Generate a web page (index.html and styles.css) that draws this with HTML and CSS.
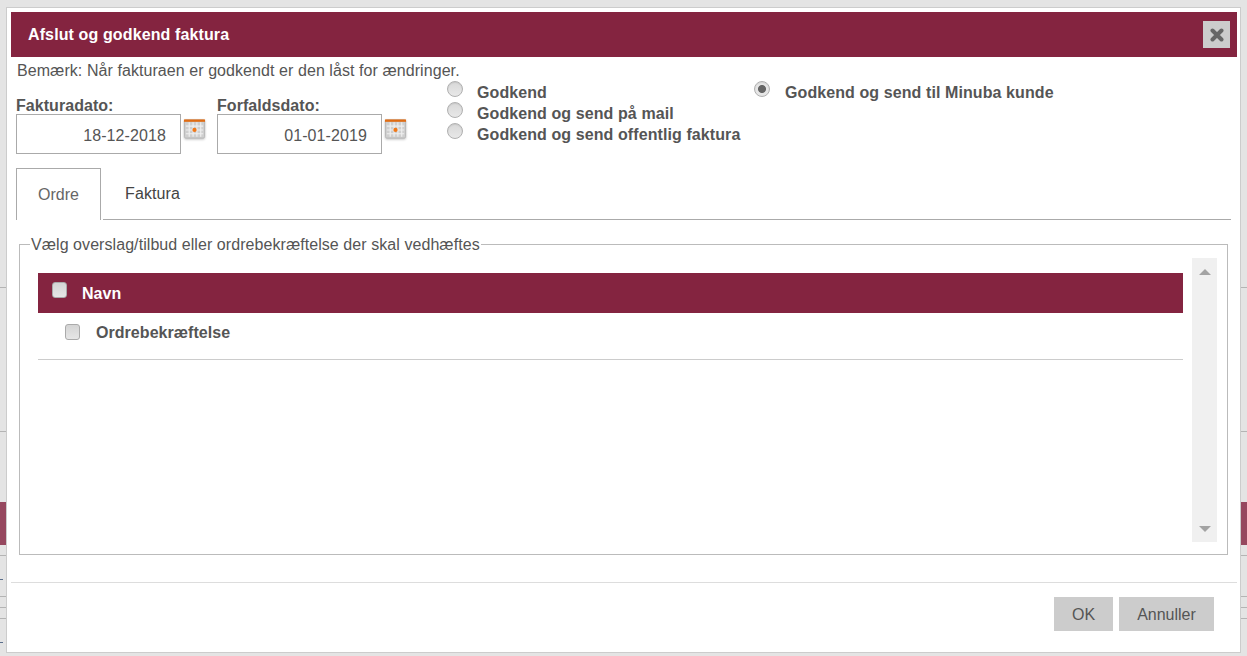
FILE: index.html
```html
<!DOCTYPE html>
<html lang="da">
<head>
<meta charset="utf-8">
<title>Afslut og godkend faktura</title>
<link rel="stylesheet" href="styles.css">
</head>
<body>
<div class="backdrop">
  <div class="bg-line bg-first"></div>
  <div class="bg-line bg-second"></div>
  <div class="bg-bar"></div>
  <div class="bg-line bg-third"></div>
  <div class="bg-dash bg-dash-a"></div>
  <div class="bg-line bg-fourth"></div>
  <div class="bg-line bg-fifth"></div>
  <div class="bg-line bg-fifth"></div>
  <div class="bg-dash bg-dash-b"></div>
</div>
<div class="dialog">
  <header class="title-bar">
    <h1 class="title">Afslut og godkend faktura</h1>
    <button class="close" type="button" aria-label="Luk">
      <svg width="14" height="14" viewBox="0 0 14 14"><path d="M2.5 2.5l9 9M11.5 2.5l-9 9" stroke="#666" stroke-width="4" stroke-linecap="round" fill="none"/></svg>
    </button>
  </header>
  <p class="note">Bemærk: Når fakturaen er godkendt er den låst for ændringer.</p>
  <div class="top-row">
    <div class="dates">
      <div class="date-field">
        <label class="date-label">Fakturadato:</label>
        <div class="date-control">
          <input class="date-input" type="text" value="18-12-2018">
          <svg class="cal" width="24" height="22" viewBox="0 0 24 22"><rect x="1.5" y="1.5" width="21" height="19" rx="1.5" fill="#cfcfcf" stroke="#b8b8b8"/><rect x="1" y="1" width="22" height="2.5" fill="#e06c14"/><path d="M3 8h18M3 12h18M3 16h18M6.5 4v15M10.5 4v15M14.5 4v15M18.5 4v15" stroke="#efefef" stroke-width="1.2"/><circle cx="12" cy="12" r="2.2" fill="#f07818"/></svg>
        </div>
      </div>
      <div class="date-field">
        <label class="date-label">Forfaldsdato:</label>
        <div class="date-control">
          <input class="date-input" type="text" value="01-01-2019">
          <svg class="cal" width="24" height="22" viewBox="0 0 24 22"><rect x="1.5" y="1.5" width="21" height="19" rx="1.5" fill="#cfcfcf" stroke="#b8b8b8"/><rect x="1" y="1" width="22" height="2.5" fill="#e06c14"/><path d="M3 8h18M3 12h18M3 16h18M6.5 4v15M10.5 4v15M14.5 4v15M18.5 4v15" stroke="#efefef" stroke-width="1.2"/><circle cx="12" cy="12" r="2.2" fill="#f07818"/></svg>
        </div>
      </div>
    </div>
    <div class="radio-col radio-col-a">
      <label class="radio-row"><input class="radio" type="radio" name="mode"><span>Godkend</span></label>
      <label class="radio-row"><input class="radio" type="radio" name="mode"><span>Godkend og send på mail</span></label>
      <label class="radio-row"><input class="radio" type="radio" name="mode"><span>Godkend og send offentlig faktura</span></label>
    </div>
    <div class="radio-col radio-col-b">
      <label class="radio-row"><input class="radio" type="radio" name="mode" checked><span>Godkend og send til Minuba kunde</span></label>
    </div>
  </div>
  <nav class="tabs">
    <span class="tab tab-active">Ordre</span>
    <span class="tab tab-plain">Faktura</span>
    <span class="tabs-rest"></span>
  </nav>
  <fieldset class="group">
    <legend class="group-legend">Vælg overslag/tilbud eller ordrebekræftelse der skal vedhæftes</legend>
    <div class="list-wrap">
      <div class="list">
        <div class="list-head"><span class="check check-head"></span><span>Navn</span></div>
        <div class="list-row"><span class="check check-row"></span><span>Ordrebekræftelse</span></div>
      </div>
      <div class="scrollbar">
        <span class="arrow arrow-up"></span>
        <span class="arrow arrow-down"></span>
      </div>
    </div>
  </fieldset>
  <footer class="footer">
    <button class="btn btn-ok" type="button">OK</button>
    <button class="btn btn-cancel" type="button">Annuller</button>
  </footer>
</div>
</body>
</html>
```
FILE: styles.css
```css
* { box-sizing: border-box; }
html, body { margin: 0; height: 100%; }
body {
  background: #e4e4e4;
  font-family: "Liberation Sans", Arial, sans-serif;
  color: #555;
  overflow: hidden;
}
.backdrop { height: 656px; display: flex; flex-direction: column; }
.bg-line { height: 1px; background: #b4b4b4; flex: none; }
.bg-first { margin-top: 287px; }
.bg-second { margin-top: 143px; }
.bg-bar { height: 43px; margin-top: 70px; background: #96485f; flex: none; }
.bg-third { margin-top: 10px; }
.bg-dash { height: 1px; width: 3px; background: #5b6f8c; flex: none; }
.bg-dash-a { margin-top: 23px; }
.bg-fourth { margin-top: 16px; }
.bg-fifth { margin-top: 10px; }
.bg-dash-b { margin-top: 23px; }

.dialog {
  position: absolute;
  left: 6px;
  top: 7px;
  width: 1235px;
  height: 646px;
  background: #fff;
  border: 1px solid #ccc;
  padding: 4px 3px 0 4px;
}
.title-bar {
  height: 45px;
  background: #842440;
  display: flex;
  align-items: center;
  justify-content: space-between;
  padding: 0 7px 0 17px;
}
.title { margin: 0; font-size: 16px; font-weight: 700; letter-spacing: 0.12px; color: #fff; }
.close {
  width: 27px;
  height: 27px;
  padding: 0;
  border: 0;
  background: #ccc;
  display: flex;
  align-items: center;
  justify-content: center;
}
.note { margin: 5px 0 0 6px; font-size: 16px; line-height: 18px; letter-spacing: 0.07px; color: #555; height: 19px; }
.top-row { display: flex; align-items: flex-start; margin-left: 5px; }
.dates { display: flex; gap: 11px; margin-top: 17px; width: 431px; flex: none; }
.date-field { display: flex; flex-direction: column; width: 190px; }
.date-label { font-size: 16px; font-weight: 700; line-height: 16px; letter-spacing: 0.05px; color: #555; }
.date-control { display: flex; align-items: flex-start; }
.date-input {
  width: 165px;
  height: 40px;
  border: 1px solid #aaa;
  padding: 3px 14px 0 4px;
  text-align: right;
  font: 16px "Liberation Sans", Arial, sans-serif;
  letter-spacing: 0.1px;
  color: #555;
  background: #fff;
  border-radius: 0;
}
.cal { margin: 4px 0 0 2px; filter: blur(0.4px) drop-shadow(0 1px 1px rgba(0,0,0,.25)); }
.radio-col { display: flex; flex-direction: column; }
.radio-col-a { width: 307px; flex: none; }
.radio-row {
  display: flex;
  height: 21px;
  font-size: 16px;
  font-weight: 700;
  line-height: 24px;
  letter-spacing: 0.09px;
  color: #555;
}
.radio-row span { margin-left: 14px; }
.radio-col-b .radio-row span { margin-left: 15px; }
.radio {
  appearance: none;
  margin: 0;
  width: 16px;
  height: 16px;
  border-radius: 50%;
  border: 1px solid #b0b0b0;
  background: linear-gradient(#d8d8d8, #e8e8e8);
  box-shadow: inset 0 1px 1px rgba(0,0,0,.08);
  flex: none;
  position: relative;
}
.radio:checked { background: radial-gradient(circle, #666 0 3.6px, #e6e6e6 4.4px); }

.tabs { display: flex; align-items: stretch; height: 52px; margin: 14px 6px 0 5px; }
.tab {
  display: flex;
  align-items: center;
  justify-content: center;
  font-size: 16px;
  color: #444;
}
.tab-plain { width: 99px; border-bottom: 1px solid #aaa; margin-left: 2px; letter-spacing: 0.1px; }
.tab-active {
  width: 85px;
  border: 1px solid #aaa;
  border-bottom: 0;
  color: #666;
}
.tabs-rest { flex: 1; border-bottom: 1px solid #aaa; }

.group {
  margin: 16px 9px 0 8px;
  padding: 0 10px 13px 18px;
  height: 319px;
  border: 1px solid #bbb;
  min-width: 0;
}
.group-legend { padding: 0 1px; margin-left: -8px; font-size: 16px; line-height: 17px; letter-spacing: 0.065px; color: #555; }
.list-wrap { display: flex; justify-content: space-between; height: 284px; margin-top: 5px; }
.list { width: 1145px; padding-top: 15px; }
.list-head {
  height: 40px;
  background: #842440;
  display: flex;
  align-items: center;
  padding: 2px 0 0 14px;
  font-size: 16px;
  font-weight: 700;
  letter-spacing: 0.05px;
  color: #fff;
}
.list-row {
  height: 47px;
  display: flex;
  align-items: center;
  padding: 0 0 6px 27px;
  border-bottom: 1px solid #ccc;
  font-size: 16px;
  font-weight: 700;
  letter-spacing: 0.05px;
  color: #555;
}
.check {
  width: 15px;
  height: 16px;
  border: 1px solid #aaa;
  border-radius: 3px;
  background: linear-gradient(#d4d4d4, #e6e6e6);
  flex: none;
}
.check-head { margin: -9px 15px 0 0; }
.check-row { margin: -3px 16px 0 0; }
.scrollbar {
  width: 25px;
  background: #f0f0f0;
  display: flex;
  flex-direction: column;
  justify-content: space-between;
  align-items: center;
  padding: 11px 0 10px;
}
.arrow { width: 0; height: 0; border-left: 6px solid transparent; border-right: 6px solid transparent; }
.arrow-up { border-bottom: 6px solid #a3a3a3; }
.arrow-down { border-top: 6px solid #a3a3a3; }

.footer {
  margin-top: 27px;
  border-top: 1px solid #ddd;
  padding: 14px 23px 0 0;
  display: flex;
  justify-content: flex-end;
  gap: 6px;
}
.btn {
  height: 34px;
  border: 0;
  background: #ccc;
  font: 16px "Liberation Sans", Arial, sans-serif;
  color: #555;
  padding: 1px 0 0;
}
.btn-ok { width: 59px; }
.btn-cancel { width: 95px; }
```
